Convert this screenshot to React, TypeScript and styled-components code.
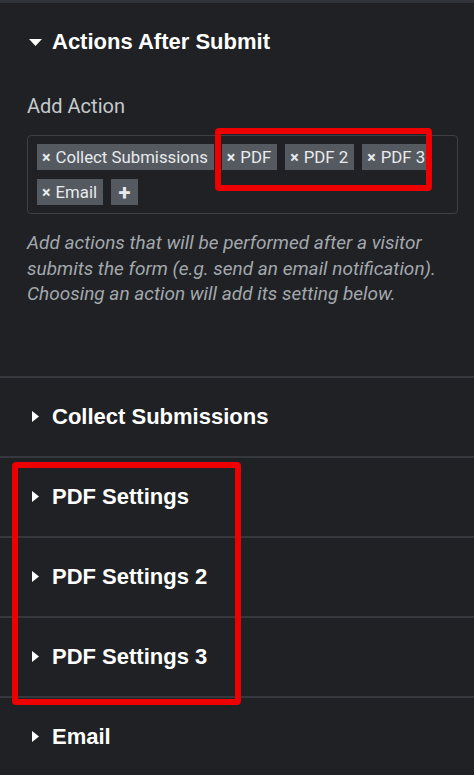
import React from "react";
import styled, { createGlobalStyle } from "styled-components";

const GlobalStyle = createGlobalStyle`
    html, body {
        margin: 0;
        padding: 0;
        background: #1f2124;
    }
    * {
        box-sizing: border-box;
    }
`;

const actions = ["Collect Submissions", "PDF", "PDF 2", "PDF 3", "Email"];
const sections = ["Collect Submissions", "PDF Settings", "PDF Settings 2", "PDF Settings 3", "Email"];

const Caret = ({ open }: { open?: boolean }) =>
    open ? (
        <CaretSvg width="13" height="7" viewBox="0 0 13 7">
            <path d="M0 0 L13 0 L6.5 7 Z" fill="#ffffff" />
        </CaretSvg>
    ) : (
        <CaretSvg width="7" height="11" viewBox="0 0 7 11">
            <path d="M0 0 L7 5.5 L0 11 Z" fill="#ffffff" />
        </CaretSvg>
    );

export default function App() {
    return (
        <>
            <GlobalStyle />
            <Panel>
                <Section>
                    <SectionHeader>
                        <CaretSlot>
                            <Caret open />
                        </CaretSlot>
                        <Title>Actions After Submit</Title>
                    </SectionHeader>
                    <SectionBody>
                        <Label>Add Action</Label>
                        <TagBox>
                            {actions.map((a) => (
                                <Tag key={a}>
                                    <Remove>×</Remove>
                                    {a}
                                </Tag>
                            ))}
                            <AddTag>+</AddTag>
                        </TagBox>
                        <Description>
                            Add actions that will be performed after a visitor submits the form (e.g. send an email
                            notification). Choosing an action will add its setting below.
                        </Description>
                    </SectionBody>
                </Section>
                {sections.map((s) => (
                    <Section key={s} divided>
                        <SectionHeader>
                            <CaretSlot>
                                <Caret />
                            </CaretSlot>
                            <Title>{s}</Title>
                        </SectionHeader>
                    </Section>
                ))}
                <Highlight style={{ left: 215, top: 125, width: 217, height: 63 }} />
                <Highlight style={{ left: 12, top: 459, width: 229, height: 243 }} />
            </Panel>
        </>
    );
}

const Panel = styled.div`
    position: relative;
    width: 474px;
    min-height: 775px;
    background: #1f2124;
    border-top: 3px solid #303337;
    overflow: hidden;
`;

const Section = styled.div<{ divided?: boolean }>`
    border-top: ${(p) => (p.divided ? "2px solid #35383c" : "none")};
`;

const SectionHeader = styled.div`
    height: 78px;
    display: flex;
    align-items: center;
    padding-left: 28px;
    gap: 10px;
`;

const CaretSlot = styled.div`
    width: 14px;
    display: flex;
    align-items: center;
    justify-content: center;
`;

const CaretSvg = styled.svg`
    display: block;
`;

const Title = styled.div`
    font-family: "Liberation Sans", Arial, sans-serif;
    font-weight: 700;
    font-size: 22px;
    color: #ffffff;
`;

const SectionBody = styled.div`
    padding: 13px 14px 69px 27px;
`;

const Label = styled.div`
    font-family: Roboto, "Liberation Sans", sans-serif;
    font-size: 20px;
    line-height: 24px;
    color: #c6c9cd;
`;

const TagBox = styled.div`
    margin-top: 17px;
    margin-right: 2px;
    border: 1px solid #3c3f43;
    border-radius: 4px;
    padding: 8px 9px;
    display: flex;
    flex-wrap: wrap;
    gap: 9px 8px;
`;

const Tag = styled.div`
    height: 26px;
    display: flex;
    align-items: center;
    padding: 0 6px 0 5px;
    background: #555a61;
    font-family: Roboto, "Liberation Sans", sans-serif;
    font-size: 16.8px;
    color: #e8eaec;
`;

const Remove = styled.span`
    font-weight: 700;
    font-size: 16px;
    margin-right: 5px;
`;

const AddTag = styled(Tag)`
    width: 27px;
    padding: 0;
    justify-content: center;
    font-size: 22px;
    font-weight: 700;
`;

const Description = styled.p`
    margin: 16px 0 0;
    font-family: Roboto, "Liberation Sans", sans-serif;
    font-style: italic;
    font-size: 19px;
    line-height: 25.5px;
    color: #a3a8ad;
`;

const Highlight = styled.div`
    position: absolute;
    border: 6px solid #ee0000;
    border-radius: 4px;
    pointer-events: none;
`;
